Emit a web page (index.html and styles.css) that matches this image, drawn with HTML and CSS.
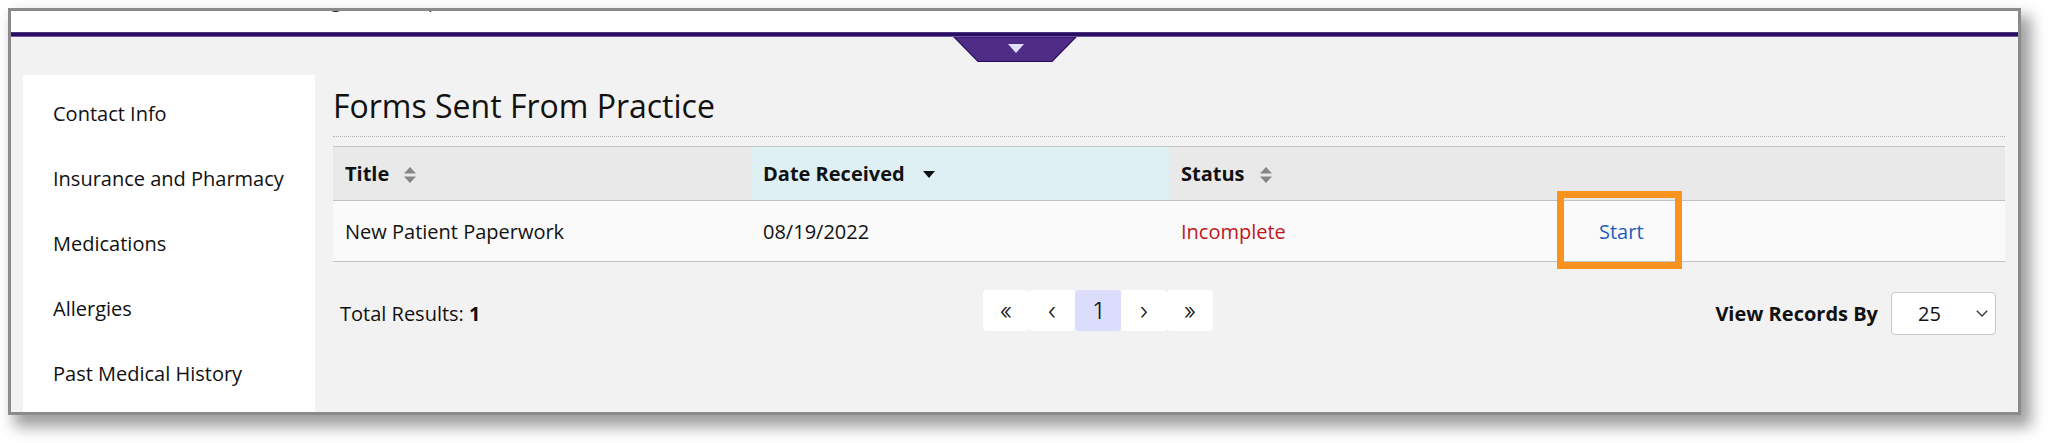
FILE: index.html
```html
<!DOCTYPE html>
<html lang="en">
<head>
<meta charset="utf-8">
<title>Forms Sent From Practice</title>
<link rel="stylesheet" href="styles.css">
</head>
<body>
<div class="shell">
<div class="frame">
  <div class="topbar"><span class="topbar-text">Welcome to Settings and Help</span></div>
  <div class="navline">
    <span class="nav-tab">
      <svg width="124" height="26" viewBox="0 0 124 26" aria-hidden="true">
        <polygon points="1,0 123,0 99,24.5 25,24.5" fill="#4f2d86" stroke="#2a0c5e" stroke-width="1.2"/>
        <polygon points="55,7 71,7 63,16" fill="#e4e0fa"/>
      </svg>
    </span>
  </div>
  <div class="main">
    <nav class="sidebar">
      <a class="side-item">Contact Info</a>
      <a class="side-item">Insurance and Pharmacy</a>
      <a class="side-item">Medications</a>
      <a class="side-item">Allergies</a>
      <a class="side-item">Past Medical History</a>
    </nav>
    <section class="content">
      <h1 class="title">Forms Sent From Practice</h1>
      <table class="forms">
        <thead>
          <tr>
            <th>Title<svg class="sort-both" width="12" height="16" viewBox="0 0 12 16"><polygon points="0,6.5 6,0 12,6.5"/><polygon points="0,9.5 12,9.5 6,16"/></svg></th>
            <th class="sorted">Date Received<svg class="sort-down" width="12" height="7" viewBox="0 0 12 7"><polygon points="0,0 12,0 6,7"/></svg></th>
            <th>Status<svg class="sort-both" width="12" height="16" viewBox="0 0 12 16"><polygon points="0,6.5 6,0 12,6.5"/><polygon points="0,9.5 12,9.5 6,16"/></svg></th>
            <th></th>
          </tr>
        </thead>
        <tbody>
          <tr>
            <td>New Patient Paperwork</td>
            <td>08/19/2022</td>
            <td class="status-incomplete">Incomplete</td>
            <td><a class="start-link">Start</a></td>
          </tr>
        </tbody>
      </table>
      <div class="footer">
        <div class="total">Total Results: <b>1</b></div>
        <div class="pager">
          <span class="page-btn">«</span>
          <span class="page-btn">‹</span>
          <span class="page-btn active">1</span>
          <span class="page-btn">›</span>
          <span class="page-btn">»</span>
        </div>
        <div class="per-page">
          <span class="per-page-label">View Records By</span>
          <span class="select">25<svg class="chev" width="12" height="7" viewBox="0 0 12 7"><polyline points="0.8,0.8 6,6 11.2,0.8" fill="none" stroke="#333" stroke-width="1.3"/></svg></span>
        </div>
      </div>
    </section>
  </div>
</div>
</div>
</body>
</html>
```
FILE: styles.css
```css
* { box-sizing: border-box; }

html, body { background: #ffffff; }

body {
  margin: 0;
  font-family: "Open Sans", "Liberation Sans", sans-serif;
  color: #111111;
}

.shell {
  width: 2048px;
  height: 443px;
  padding: 8px;
  background: #ffffff;
}

.frame {
  width: 2013px;
  height: 407px;
  border: 3px solid #8b8b8b;
  background: #f2f2f2;
  overflow: hidden;
  display: flex;
  flex-direction: column;
  box-shadow: 8px 10px 14px 2px rgba(0, 0, 0, 0.38);
}

.topbar {
  height: 21px;
  background: #ffffff;
  overflow: hidden;
  padding-left: 150px;
}

.topbar-text {
  display: block;
  margin-top: -25px;
  font-size: 20px;
  line-height: 27px;
  color: #333;
}

.navline {
  position: relative;
  height: 5px;
  background: #2b0d62;
  border-top: 1px solid #4a3585;
  border-bottom: 1px solid #6b5aa3;
  flex: none;
}

.nav-tab {
  position: absolute;
  left: 50%;
  top: 4px;
  transform: translateX(-50%);
  width: 124px;
  height: 26px;
  z-index: 2;
}

.nav-tab svg { display: block; }

.main {
  flex: 1;
  display: flex;
  gap: 18px;
  padding: 38px 13px 0 12px;
  min-height: 0;
}

.sidebar {
  width: 292px;
  flex: none;
  background: #ffffff;
  padding-top: 6px;
}

.side-item {
  display: block;
  height: 65px;
  line-height: 65px;
  padding-left: 30px;
  font-size: 20px;
  color: #111;
}

.content {
  flex: 1;
  min-width: 0;
}

.title {
  margin: 9px 0 0;
  font-size: 32px;
  line-height: 44px;
  font-weight: 400;
  color: #111;
  padding-bottom: 8px;
  border-bottom: 1px dotted #b5b5b5;
}

.forms {
  margin-top: 9px;
  width: 100%;
  border-collapse: collapse;
  table-layout: fixed;
  font-size: 20px;
  border-top: 1px solid #c6c6c6;
}

.forms th {
  height: 54px;
  padding: 0 12px;
  text-align: left;
  font-weight: 700;
  background: #e9e9e9;
  border-bottom: 1px solid #c2c2c2;
  white-space: nowrap;
}

.forms th.sorted { background: #dff0f4; }

.forms td {
  height: 61px;
  padding: 0 12px;
  background: #fafafa;
  border-bottom: 1px solid #c2c2c2;
  color: #111;
}

.sort-both {
  fill: #858585;
  margin-left: 15px;
  vertical-align: -2px;
}

.sort-down {
  fill: #111;
  margin-left: 18px;
  vertical-align: 3px;
}

.forms td.status-incomplete { color: #c0161f; }

.start-link {
  position: relative;
  color: #1f5cbf;
  display: inline-block;
}

.start-link::after {
  content: "";
  position: absolute;
  left: -42px;
  right: -38px;
  top: -27px;
  bottom: -24px;
  border: 7px solid #f7931e;
}

.footer {
  margin-top: 30px;
  display: flex;
  justify-content: space-between;
  align-items: center;
  padding: 0 9px 0 7px;
  font-size: 20px;
}

.total b { font-weight: 700; }

.pager {
  display: flex;
  align-self: flex-start;
  margin-top: -2px;
}

.page-btn {
  width: 46px;
  height: 41px;
  display: flex;
  align-items: center;
  justify-content: center;
  background: #ffffff;
  border-radius: 4px;
  font-family: "Inter", "Liberation Sans", sans-serif;
  font-weight: 300;
  font-size: 23px;
  color: #111;
}

.page-btn.active { background: #dcdcfc; }

.per-page {
  display: flex;
  align-items: center;
  gap: 13px;
}

.per-page-label { font-weight: 700; }

.select {
  position: relative;
  width: 105px;
  height: 43px;
  display: flex;
  align-items: center;
  padding-left: 26px;
  background: #ffffff;
  border: 1px solid #c9c9c9;
  border-radius: 4px;
  font-size: 20px;
}

.chev {
  margin-left: auto;
  margin-right: 7px;
}
```
